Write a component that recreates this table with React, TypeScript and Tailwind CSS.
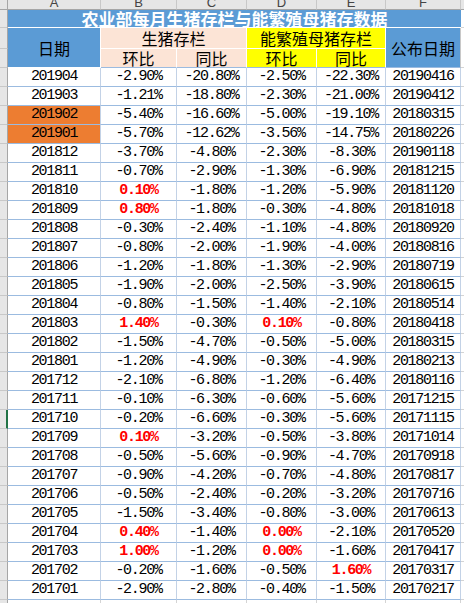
import React from "react";

type Cell = { v: string; red?: boolean };

const rows: [string, Cell, Cell, Cell, Cell, string][] = [
  ["201904", { v: "-2.90%" }, { v: "-20.80%" }, { v: "-2.50%" }, { v: "-22.30%" }, "20190416"],
  ["201903", { v: "-1.21%" }, { v: "-18.80%" }, { v: "-2.30%" }, { v: "-21.00%" }, "20190412"],
  ["201902", { v: "-5.40%" }, { v: "-16.60%" }, { v: "-5.00%" }, { v: "-19.10%" }, "20180315"],
  ["201901", { v: "-5.70%" }, { v: "-12.62%" }, { v: "-3.56%" }, { v: "-14.75%" }, "20180226"],
  ["201812", { v: "-3.70%" }, { v: "-4.80%" }, { v: "-2.30%" }, { v: "-8.30%" }, "20190118"],
  ["201811", { v: "-0.70%" }, { v: "-2.90%" }, { v: "-1.30%" }, { v: "-6.90%" }, "20181215"],
  ["201810", { v: "0.10%", red: true }, { v: "-1.80%" }, { v: "-1.20%" }, { v: "-5.90%" }, "20181120"],
  ["201809", { v: "0.80%", red: true }, { v: "-1.80%" }, { v: "-0.30%" }, { v: "-4.80%" }, "20181018"],
  ["201808", { v: "-0.30%" }, { v: "-2.40%" }, { v: "-1.10%" }, { v: "-4.80%" }, "20180920"],
  ["201807", { v: "-0.80%" }, { v: "-2.00%" }, { v: "-1.90%" }, { v: "-4.00%" }, "20180816"],
  ["201806", { v: "-1.20%" }, { v: "-1.80%" }, { v: "-1.30%" }, { v: "-2.90%" }, "20180719"],
  ["201805", { v: "-1.90%" }, { v: "-2.00%" }, { v: "-2.50%" }, { v: "-3.90%" }, "20180615"],
  ["201804", { v: "-0.80%" }, { v: "-1.50%" }, { v: "-1.40%" }, { v: "-2.10%" }, "20180514"],
  ["201803", { v: "1.40%", red: true }, { v: "-0.30%" }, { v: "0.10%", red: true }, { v: "-0.80%" }, "20180418"],
  ["201802", { v: "-1.50%" }, { v: "-4.70%" }, { v: "-0.50%" }, { v: "-5.00%" }, "20180315"],
  ["201801", { v: "-1.20%" }, { v: "-4.90%" }, { v: "-0.30%" }, { v: "-4.90%" }, "20180213"],
  ["201712", { v: "-2.10%" }, { v: "-6.80%" }, { v: "-1.20%" }, { v: "-6.40%" }, "20180116"],
  ["201711", { v: "-0.10%" }, { v: "-6.30%" }, { v: "-0.60%" }, { v: "-5.60%" }, "20171215"],
  ["201710", { v: "-0.20%" }, { v: "-6.60%" }, { v: "-0.30%" }, { v: "-5.60%" }, "20171115"],
  ["201709", { v: "0.10%", red: true }, { v: "-3.20%" }, { v: "-0.50%" }, { v: "-3.80%" }, "20171014"],
  ["201708", { v: "-0.50%" }, { v: "-5.60%" }, { v: "-0.90%" }, { v: "-4.70%" }, "20170918"],
  ["201707", { v: "-0.90%" }, { v: "-4.20%" }, { v: "-0.70%" }, { v: "-4.80%" }, "20170817"],
  ["201706", { v: "-0.50%" }, { v: "-2.40%" }, { v: "-0.20%" }, { v: "-3.20%" }, "20170716"],
  ["201705", { v: "-1.50%" }, { v: "-3.40%" }, { v: "-0.80%" }, { v: "-3.00%" }, "20170613"],
  ["201704", { v: "0.40%", red: true }, { v: "-1.40%" }, { v: "0.00%", red: true }, { v: "-2.10%" }, "20170520"],
  ["201703", { v: "1.00%", red: true }, { v: "-1.20%" }, { v: "0.00%", red: true }, { v: "-1.60%" }, "20170417"],
  ["201702", { v: "-0.20%" }, { v: "-1.60%" }, { v: "-0.50%" }, { v: "1.60%", red: true }, "20170317"],
  ["201701", { v: "-2.90%" }, { v: "-2.80%" }, { v: "-0.40%" }, { v: "-1.50%" }, "20170217"],
];

const widths = ["w-[93px]", "w-[76px]", "w-[70px]", "w-[70px]", "w-[69px]", "w-[75px]"];
const letters = ["A", "B", "C", "D", "E", "F"];

const num = "font-['Liberation_Mono',monospace] text-[15px] tracking-[-1.3px]";
const cjk = "font-['Noto_Sans_CJK_SC',sans-serif]";

const Gutter = ({ h, active }: { h: string; active?: boolean }) => (
  <div className={`${h} w-[8px] shrink-0 bg-[#e6e6e6] border-b border-r ${active ? "border-r-[#217346] border-r-2" : "border-r-[#a6a6a6]"} border-b-[#c8c8c8]`} />
);

const DataCell = ({ w, cell, orange }: { w: string; cell: Cell; orange?: boolean }) => (
  <div
    className={`${w} shrink-0 h-full flex items-center justify-center border-r border-b border-r-[#c3d2e6] border-b-[#9bbbe0] ${orange ? "bg-[#ed7d31]" : "bg-white"} ${num} ${cell.red ? "text-[#ff0000] font-bold" : "text-black"}`}
  >
    {cell.v}
  </div>
);

export default function App() {
  return (
    <div className="w-[464px] h-[603px] overflow-hidden bg-white select-none">
      {/* column letters */}
      <div className="flex h-[10px]">
        <div className="w-[8px] shrink-0 bg-[#e6e6e6] border-r border-b border-[#a6a6a6]" />
        {letters.map((l, i) => (
          <div key={l} className={`${widths[i]} shrink-0 h-[10px] overflow-hidden bg-[#e6e6e6] border-r border-b border-r-[#c8c8c8] border-b-[#a6a6a6] flex justify-center`}>
            <div className="-mt-[4px] font-['Liberation_Sans',sans-serif] text-[13px] leading-[14px] text-[#444]">{l}</div>
          </div>
        ))}
        <div className="flex-1 bg-[#e6e6e6] border-b border-[#a6a6a6]" />
      </div>

      {/* title */}
      <div className="flex h-[18px]">
        <Gutter h="h-[18px]" />
        <div className={`w-[453px] shrink-0 bg-[#5b9bd5] border-b border-white flex items-center justify-center text-white font-bold text-[17px] leading-none ${cjk}`}>
          农业部每月生猪存栏与能繁殖母猪存数据
        </div>
        <div className="flex-1 border-b border-[#d4d4d4]" />
      </div>

      {/* headers */}
      <div className="flex h-[40px]">
        <div className="flex flex-col">
          <Gutter h="h-[21px]" />
          <Gutter h="h-[19px]" />
        </div>
        <div className={`w-[93px] shrink-0 bg-[#5b9bd5] border-r border-b border-white flex items-center justify-center text-[16px] text-black ${cjk}`}>
          日期
        </div>
        <div className="w-[146px] shrink-0 flex flex-col">
          <div className={`h-[21px] bg-[#fce4d6] border-r border-b border-white flex items-center justify-center text-[16px] leading-none text-black ${cjk}`}>生猪存栏</div>
          <div className="h-[19px] flex">
            <div className={`w-[76px] bg-[#fce4d6] border-r border-b border-r-white border-b-[#9bbbe0] flex items-center justify-center text-[16px] leading-none ${cjk}`}>环比</div>
            <div className={`w-[70px] bg-[#fce4d6] border-r border-b border-r-white border-b-[#9bbbe0] flex items-center justify-center text-[16px] leading-none ${cjk}`}>同比</div>
          </div>
        </div>
        <div className="w-[139px] shrink-0 flex flex-col">
          <div className={`h-[21px] bg-[#ffff00] border-r border-b border-white flex items-center justify-center text-[16px] leading-none text-black ${cjk}`}>能繁殖母猪存栏</div>
          <div className="h-[19px] flex">
            <div className={`w-[70px] bg-[#ffff00] border-r border-b border-r-white border-b-[#9bbbe0] flex items-center justify-center text-[16px] leading-none ${cjk}`}>环比</div>
            <div className={`w-[69px] bg-[#ffff00] border-r border-b border-r-white border-b-[#9bbbe0] flex items-center justify-center text-[16px] leading-none ${cjk}`}>同比</div>
          </div>
        </div>
        <div className={`w-[75px] shrink-0 bg-[#5b9bd5] border-r border-b border-r-[#c8c8c8] border-b-[#9bbbe0] flex items-center justify-center text-[16px] text-black ${cjk}`}>
          公布日期
        </div>
        <div className="flex-1 border-b border-[#d4d4d4]" />
      </div>

      {/* data */}
      {rows.map((r, i) => {
        const orange = r[0] === "201902" || r[0] === "201901";
        return (
          <div key={r[0]} className="flex h-[19px]">
            <Gutter h="h-[19px]" active={r[0] === "201710"} />
            <DataCell w={widths[0]} cell={{ v: r[0] }} orange={orange} />
            <DataCell w={widths[1]} cell={r[1]} />
            <DataCell w={widths[2]} cell={r[2]} />
            <DataCell w={widths[3]} cell={r[3]} />
            <DataCell w={widths[4]} cell={r[4]} />
            <DataCell w={widths[5]} cell={{ v: r[5] }} />
            <div className="flex-1 border-b border-[#d4d4d4]" />
          </div>
        );
      })}
      <div className="flex h-[19px]">
        <Gutter h="h-[19px]" />
        {widths.map((w) => (
          <div key={w + Math.random()} className={`${w} shrink-0 border-r border-[#d4d4d4]`} />
        ))}
      </div>
    </div>
  );
}
